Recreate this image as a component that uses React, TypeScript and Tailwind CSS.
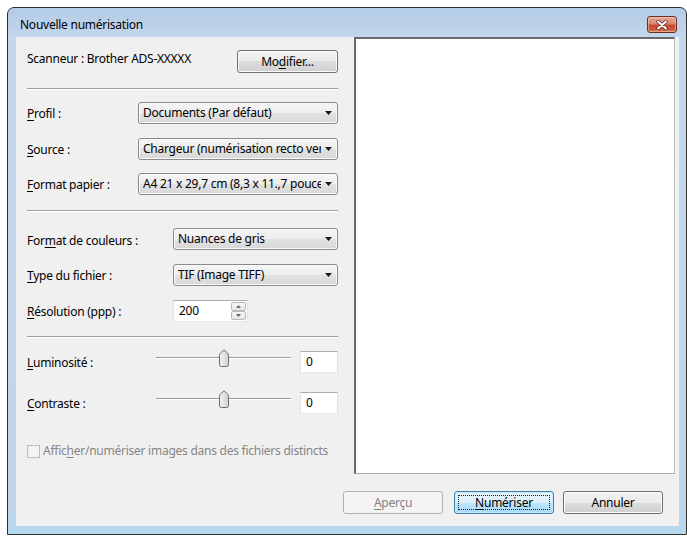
import React from "react";

const U = ({ children }: { children: React.ReactNode }) => (
  <span className="underline decoration-1 underline-offset-[2px]">{children}</span>
);

function Arrow() {
  return (
    <svg width="7" height="4" viewBox="0 0 7 4">
      <path d="M0 0H7L3.5 4Z" fill="#1a1a1a" />
    </svg>
  );
}

function Combo({ className, text }: { className: string; text: string }) {
  return (
    <div
      className={`flex h-[22px] items-center rounded-[3px] border border-[#8a8a8a] bg-[linear-gradient(to_bottom,#f5f5f5_0%,#ededed_50%,#e2e2e2_50%,#d8d8d8_100%)] pl-[4px] pr-[3px] shadow-[inset_0_0_0_1px_#fbfbfb] ${className}`}
    >
      <span className="min-w-0 flex-1 overflow-hidden whitespace-nowrap">{text}</span>
      <span className="flex w-[13px] shrink-0 justify-end pr-[2px]">
        <Arrow />
      </span>
    </div>
  );
}

function Btn({ children, className }: { children: React.ReactNode; className: string }) {
  return (
    <div
      className={`flex h-[23px] items-center justify-center rounded-[3px] border border-[#707070] bg-[linear-gradient(to_bottom,#f2f2f2_0%,#ebebeb_50%,#dddddd_50%,#cfcfcf_100%)] shadow-[inset_0_0_0_1px_#fcfcfc] ${className}`}
    >
      {children}
    </div>
  );
}

function TextBox({ children, className }: { children: React.ReactNode; className: string }) {
  return (
    <div
      className={`flex h-[22px] items-center border border-[#abadb3] border-b-[#e3e9ef] border-l-[#e2e3ea] border-r-[#e2e3ea] bg-white ${className}`}
    >
      {children}
    </div>
  );
}

function Thumb() {
  return (
    <svg className="absolute left-[62px] top-[-2px]" width="12" height="18" viewBox="0 0 12 18">
      <defs>
        <linearGradient id="tg" x1="0" y1="0" x2="1" y2="0">
          <stop offset="0" stopColor="#f4f4f4" />
          <stop offset="1" stopColor="#d0d0d0" />
        </linearGradient>
      </defs>
      <path
        d="M1.5 6.5 Q1.5 5 2.8 3.8 L6 0.8 L9.2 3.8 Q10.5 5 10.5 6.5 V15.5 Q10.5 17.5 8.5 17.5 H3.5 Q1.5 17.5 1.5 15.5 Z"
        fill="url(#tg)"
        stroke="#6a6a6a"
        strokeWidth="1"
      />
    </svg>
  );
}

function Slider() {
  return (
    <div className="relative h-[22px] w-[135px]">
      <div className="mt-[6px] h-[2px] border-t border-b border-t-[#9c9c9c] border-b-white" />
      <Thumb />
    </div>
  );
}

function Sep() {
  return <div className="h-[2px] border-t border-b border-t-[#a0a0a0] border-b-white" />;
}

function SpinHalf({ up }: { up: boolean }) {
  return (
    <div className="flex h-[9px] w-[15px] items-center justify-center rounded-[2px] border border-[#b9b9b9] bg-[linear-gradient(to_bottom,#f7f7f7,#e6e6e6)]">
      <svg width="5" height="3" viewBox="0 0 5 3">
        <path d={up ? "M0 3H5L2.5 0Z" : "M0 0H5L2.5 3Z"} fill="#5b6a7a" />
      </svg>
    </div>
  );
}

export default function App() {
  return (
    <div className="h-[537px] w-[687px] overflow-hidden bg-white pl-[7px] pt-[7px] font-['Noto_Sans',sans-serif] text-[12px] leading-[16px] tracking-[-0.25px] text-black">
      <div className="flex h-[528px] w-[680px] flex-col rounded-t-[7px] border border-[#303030] bg-[linear-gradient(to_bottom,#b3cbe5_0px,#c4d7ec_30px,#c1d5ea_500px,#b3d9ef_100%)]">
        {/* Title bar */}
        <div className="flex h-[29px] shrink-0 items-center justify-between pl-[12px] pr-[9px] pt-[4px]">
          <span>Nouvelle numérisation</span>
          <div className="flex h-[17px] w-[30px] items-center justify-center rounded-[3px] border border-[#6b2d24] bg-[linear-gradient(to_bottom,#e9ab9b_0%,#d98470_45%,#c5472f_55%,#cf5a3d_85%,#e07a58_100%)] shadow-[inset_0_0_0_1px_rgba(255,220,210,0.45)]">
            <svg width="12" height="10" viewBox="0 0 12 10">
              <path d="M2 1.5L10 8.5M10 1.5L2 8.5" stroke="#5a2a22" strokeWidth="3.4" strokeLinecap="round" />
              <path d="M2 1.5L10 8.5M10 1.5L2 8.5" stroke="#ffffff" strokeWidth="2" strokeLinecap="round" />
            </svg>
          </div>
        </div>

        {/* Client area */}
        <div className="ml-[8px] mr-[7px] flex h-[489px] flex-col bg-[#f0f0f0]">
          <div className="flex h-[437px]">
            {/* Left panel */}
            <div className="flex w-[338px] shrink-0 flex-col pl-[11px] pr-[16px]">
              <div className="mt-[13px] flex h-[23px] items-start">
                <span className="mt-[1px] flex-1 whitespace-nowrap">Scanneur : Brother ADS-XXXXX</span>
                <Btn className="w-[101px]">
                  <span>
                    Mo<U>d</U>ifier...
                  </span>
                </Btn>
              </div>

              <div className="mt-[15px]">
                <Sep />
              </div>

              <div className="mt-[12px] flex items-center">
                <span className="flex-1 pt-[1px]">
                  <U>P</U>rofil :
                </span>
                <Combo className="w-[200px]" text="Documents (Par défaut)" />
              </div>
              <div className="mt-[14px] flex items-center">
                <span className="flex-1 pt-[1px]">
                  <U>S</U>ource :
                </span>
                <Combo className="w-[200px]" text="Chargeur (numérisation recto verso)" />
              </div>
              <div className="mt-[13px] flex items-center">
                <span className="flex-1 pt-[1px]">
                  <U>F</U>ormat papier :
                </span>
                <Combo className="w-[200px]" text="A4 21 x 29,7 cm (8,3 x 11.,7 pouces)" />
              </div>

              <div className="mt-[15px]">
                <Sep />
              </div>

              <div className="mt-[16px] flex items-center">
                <span className="flex-1 pt-[3px]">
                  For<U>m</U>at de couleurs :
                </span>
                <Combo className="w-[165px]" text="Nuances de gris" />
              </div>
              <div className="mt-[14px] flex items-center">
                <span className="flex-1 pt-[2px]">
                  <U>T</U>ype du fichier :
                </span>
                <Combo className="w-[165px]" text="TIF (Image TIFF)" />
              </div>
              <div className="mt-[14px] flex items-center">
                <span className="flex-1 pt-[1px]">
                  <U>R</U>ésolution (ppp) :
                </span>
                <div className="w-[165px]">
                  <TextBox className="w-[75px] justify-between pl-[5px] pr-[1px]">
                    <span>200</span>
                    <div className="flex flex-col">
                      <SpinHalf up={true} />
                      <SpinHalf up={false} />
                    </div>
                  </TextBox>
                </div>
              </div>

              <div className="mt-[14px]">
                <Sep />
              </div>

              <div className="mt-[13px] flex items-center">
                <span className="flex-1 pt-[2px]">
                  <U>L</U>uminosité :
                </span>
                <Slider />
                <TextBox className="ml-[9px] w-[38px] pl-[5px]">0</TextBox>
              </div>
              <div className="mt-[19px] flex items-center">
                <span className="flex-1 pt-[2px]">
                  <U>C</U>ontraste :
                </span>
                <Slider />
                <TextBox className="ml-[9px] w-[38px] pl-[5px]">0</TextBox>
              </div>

              <div className="mt-[29px] flex h-[16px] items-center">
                <div className="h-[13px] w-[13px] shrink-0 border border-[#bcbcbc] bg-[#f4f4f4]" />
                <span className="ml-[3px] whitespace-nowrap text-[#858585]">
                  Affic<U>h</U>er/numériser images dans des fichiers distincts
                </span>
              </div>
            </div>

            {/* Preview */}
            <div className="h-[437px] w-[321px] shrink-0 border-b border-l-2 border-r border-t-2 border-b-[#a9a9a9] border-l-[#6a6a6a] border-r-[#bdbdbd] border-t-[#6a6a6a] bg-white" />
          </div>

          {/* Buttons */}
          <div className="mt-[17px] flex justify-end pr-[16px]">
            <div className="flex h-[23px] w-[100px] items-center justify-center rounded-[3px] border border-[#adb2b5] bg-[#f4f4f4] text-[#838383]">
              <span>
                <U>A</U>perçu
              </span>
            </div>
            <div className="relative ml-[11px] flex h-[23px] w-[100px] items-center justify-center rounded-[3px] border border-[#3c7fb1] bg-[linear-gradient(to_bottom,#eaf6fd_0%,#d9f0fc_50%,#bee6fd_50%,#a7d9f5_100%)] shadow-[inset_0_0_0_1px_#c7e9f9]">
              <div className="absolute inset-[3px] border border-dotted border-[#222]" />
              <span>
                <U>N</U>umériser
              </span>
            </div>
            <Btn className="ml-[9px] w-[100px]">
              <span>Annuler</span>
            </Btn>
          </div>
        </div>
      </div>
    </div>
  );
}
